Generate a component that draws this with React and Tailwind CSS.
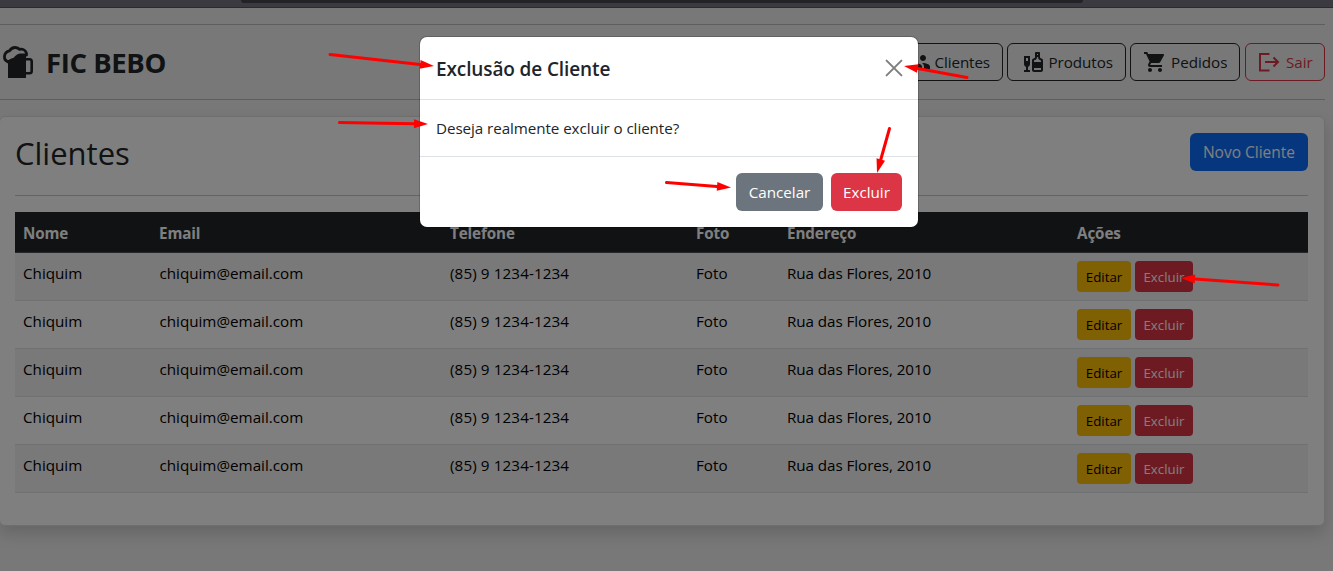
import React from "react";
import { MdLiquor, MdShoppingCart, MdPeople } from "react-icons/md";

const rows = [1, 2, 3, 4, 5];

function BeerIcon({ className }) {
  return (
    <svg viewBox="0 0 34 34" className={className}>
      <path d="M8 15.5 14 13.5 20 9.5H26V33H8Z" fill="currentColor" />
      <path
        d="M8.8 17.3C5.8 16.3 4.2 14 4.5 11.2 4.8 8.2 6.9 6.3 9.5 5.8 11 3.4 13.2 2.3 15.6 2.5 17.3 2.6 18.7 3.4 19.7 4.4 22.6 3.7 25.6 5.2 26.5 8.3V10H20C17.5 10 16.5 12 14.8 13.5 13 15 10.5 14.5 8.8 17.3Z"
        fill="none"
        stroke="currentColor"
        strokeWidth="2.8"
        strokeLinejoin="round"
      />
      <path d="M25.5 14.3H29.5Q31.7 14.3 31.7 16.5V26Q31.7 28.2 29.5 28.2H25.5" fill="none" stroke="currentColor" strokeWidth="2.6" />
    </svg>
  );
}

function ExitIcon({ className }) {
  return (
    <svg viewBox="0 0 24 24" className={className} fill="none" stroke="currentColor" strokeWidth="2">
      <path d="M12.5 4H3v16.5h9.5" />
      <path d="M8 12h13M16.5 7.5 21 12l-4.5 4.5" />
    </svg>
  );
}

function NavButton({ icon: Icon, label, className, iconClass }) {
  return (
    <button className={"flex h-[38px] shrink-0 items-center rounded-[6px] border text-[15.2px] leading-6 whitespace-nowrap " + className}>
      <Icon className={"shrink-0 " + iconClass} />
      <span>{label}</span>
    </button>
  );
}

function Arrow({ x1, y1, x2, y2 }) {
  const a = Math.atan2(y2 - y1, x2 - x1);
  const bx = x2 - 14 * Math.cos(a);
  const by = y2 - 14 * Math.sin(a);
  const px = -Math.sin(a) * 4.4;
  const py = Math.cos(a) * 4.4;
  return (
    <g>
      <line x1={x1} y1={y1} x2={bx} y2={by} stroke="#ff0000" strokeWidth="3" strokeLinecap="round" />
      <polygon points={`${x2},${y2} ${bx + px},${by + py} ${bx - px},${by - py}`} fill="#ff0000" />
    </g>
  );
}

export default function App() {
  return (
    <div className="relative h-[571px] w-[1333px] overflow-hidden bg-[#f0f0f0] font-['Open_Sans','Noto_Sans',sans-serif] text-[#212529]">
      <div className="h-2 border-b border-[#2b2a30] bg-[#3b3a40]">
        <div className="ml-[241px] h-[3px] w-[842px] rounded-b-[4px] bg-[#232227]" />
      </div>

      <div className="flex h-[563px] flex-col">
        <header className="mt-4 flex h-[76px] w-[1325px] items-center justify-between border-y border-[#bcbdbd]">
          <h1 className="flex items-center">
            <BeerIcon className="h-[34px] w-[34px] shrink-0" />
            <span className="ml-[12px] pt-px text-[27.5px] leading-8 font-bold tracking-[-0.4px]">FIC BEBO</span>
          </h1>
          <nav className="flex items-center">
            <NavButton icon={MdPeople} label="Clientes" className="mr-1 w-[120px] justify-end border-[#212529] pr-3 tracking-[-0.1px]" iconClass="mr-1 h-6 w-6" />
            <NavButton icon={MdLiquor} label="Produtos" className="mr-1 w-[119px] border-[#212529] pl-[13px] tracking-[-0.05px]" iconClass="mr-[3.5px] h-6 w-6" />
            <NavButton icon={MdShoppingCart} label="Pedidos" className="mr-[5px] w-[110px] border-[#212529] pl-3" iconClass="mr-[4px] h-6 w-6" />
            <NavButton icon={ExitIcon} label="Sair" className="w-[80px] border-[#dc3545] pl-[11px] text-[#dc3545]" iconClass="mr-[5px] h-6 w-6" />
          </nav>
        </header>

        <main className="-ml-px mt-4 h-[410px] w-[1326px] rounded-[6px] border border-[#dcdcdc] bg-white px-[15px] pt-4 shadow-[0_8px_16px_rgba(0,0,0,0.15)]">
          <div className="flex h-[63px] w-[1293px] items-start justify-between border-b border-[#c8c9ca]">
            <h2 className="text-[31px] leading-[41px] font-medium">Clientes</h2>
            <button className="h-[38px] w-[118px] rounded-[6px] bg-[#0d6efd] pt-px text-[15.5px] whitespace-nowrap text-white">Novo Cliente</button>
          </div>
          <table className="mt-4 w-[1293px] table-fixed border-collapse text-left text-[15.2px] leading-6">
            <colgroup>
              <col className="w-[136px]" />
              <col className="w-[291px]" />
              <col className="w-[246px]" />
              <col className="w-[91px]" />
              <col className="w-[290px]" />
              <col className="w-[239px]" />
            </colgroup>
            <thead>
              <tr className="h-[40px] border-b border-[#4d5154] bg-[#212529] text-white">
                {["Nome", "Email", "Telefone", "Foto", "Endereço", "Ações"].map((h) => (
                  <th key={h} className="px-2 pt-[2px] pb-0 font-bold tracking-[-0.1px]">{h}</th>
                ))}
              </tr>
            </thead>
            <tbody className="text-black">
              {rows.map((r) => (
                <tr key={r} className="h-12 border-b border-[#dee2e6] align-top odd:bg-[#f2f2f2]">
                  <td className="px-2 pt-2">Chiquim</td>
                  <td className="px-2 pt-2 pl-[8.5px]">chiquim@email.com</td>
                  <td className="px-2 pt-2 tracking-[0.12px]">(85) 9 1234-1234</td>
                  <td className="px-2 pt-2">Foto</td>
                  <td className="px-2 pt-2 tracking-[-0.06px]">Rua das Flores, 2010</td>
                  <td className="px-2 pt-2">
                    <div className="flex gap-1 text-[13.3px]">
                      <button className="h-[31px] w-[54px] rounded-[4px] bg-[#ffc107] pt-px">Editar</button>
                      <button className="h-[31px] w-[58px] rounded-[4px] bg-[#dc3545] pt-px text-white">Excluir</button>
                    </div>
                  </td>
                </tr>
              ))}
            </tbody>
          </table>
        </main>
      </div>

      <div className="absolute inset-x-0 top-2 bottom-0 bg-black/50" />

      <section role="dialog" className="absolute top-[37px] left-[420px] flex h-[190px] w-[498px] flex-col rounded-[7px] bg-white shadow-[0_0_0_1px_rgba(0,0,0,0.18)]">
        <div className="flex h-[63px] items-center justify-between border-b border-[#dee2e6] px-4">
          <h5 className="pt-[2px] text-[19px] leading-[30px] font-semibold tracking-[-0.12px]">Exclusão de Cliente</h5>
          <svg viewBox="0 0 16 16" className="h-4 w-4 overflow-visible text-[#7f7f7f]">
            <path d="M.6.6 15.4 15.4M15.4.6.6 15.4" fill="none" stroke="currentColor" strokeWidth="2" strokeLinecap="round" />
          </svg>
        </div>
        <p className="h-[57px] border-b border-[#dee2e6] px-4 pt-4 text-[15.2px] leading-6 tracking-[-0.07px]">Deseja realmente excluir o cliente?</p>
        <div className="flex justify-end gap-2 px-4 pt-4 text-[15.2px] text-white">
          <button className="h-[38px] w-[87px] rounded-[6px] bg-[#6c757d] pt-px">Cancelar</button>
          <button className="h-[38px] w-[71px] rounded-[6px] bg-[#dc3545] pt-px">Excluir</button>
        </div>
      </section>

      <svg className="pointer-events-none absolute inset-0 h-[571px] w-[1333px]">
        <Arrow x1={330} y1={54.5} x2={434} y2={66} />
        <Arrow x1={339.5} y1={122.5} x2={428} y2={124} />
        <Arrow x1={967} y1={77.5} x2={904} y2={66} />
        <Arrow x1={889.5} y1={128.5} x2={877} y2={173} />
        <Arrow x1={666.5} y1={182.5} x2={731} y2={187.5} />
        <Arrow x1={1278} y1={285} x2={1181} y2={278} />
      </svg>
    </div>
  );
}
